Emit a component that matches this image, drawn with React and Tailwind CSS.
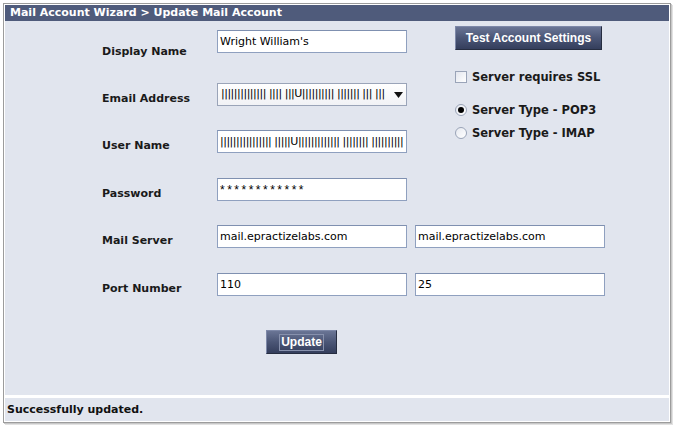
import React from 'react';

const inputCls =
  'h-[23px] w-[190px] border border-[#8fa0bf] border-t-[#7f90b0] bg-white px-[2px] text-[11px] leading-[21px] text-black outline-none';

function Field({ value, className = '' }) {
  return <input type="text" readOnly value={value} className={`${inputCls} ${className}`} />;
}

function Label({ children, top = 'pt-[9px]' }) {
  return <div className={`w-[115px] ${top} text-[11px] font-bold leading-[14px] text-[#1a1a1a]`}>{children}</div>;
}

function NavyButton({ children, className = '' }) {
  return (
    <button
      className={`border border-[#262d40] border-t-[#7d88a8] border-l-[#7d88a8] bg-gradient-to-b from-[#6a7595] via-[#4b5676] to-[#343e5c] font-['Liberation_Sans',sans-serif] text-[12px] font-bold text-white ${className}`}
    >
      {children}
    </button>
  );
}

function Radio({ checked, label }) {
  return (
    <label className="flex h-[14px] items-center gap-[5px]">
      <span className="flex h-[12px] w-[12px] items-center justify-center rounded-full border border-[#9aa4b8] bg-gradient-to-br from-[#e6e9f0] to-white">
        {checked && <span className="h-[6px] w-[6px] rounded-full bg-black" />}
      </span>
      <span className="text-[11.5px] font-bold leading-[14px] text-[#1a1a1a]">{label}</span>
    </label>
  );
}

export default function App() {
  return (
    <div className="h-[426px] w-[675px] bg-white pl-[3px] pt-[3px] font-['DejaVu_Sans',sans-serif]">
      <div className="flex h-[420px] w-[668px] flex-col border border-[#9c9c9c] bg-white p-px shadow-[1px_1px_0_#c8c8c8,2px_2px_0_#e2e2e2]">
        {/* Header */}
        <div className="h-[16px] bg-[#4f5b7b] pl-[5px] text-[11px] font-bold leading-[16px] text-white">
          Mail Account Wizard &gt; Update Mail Account
        </div>

        {/* Form body */}
        <div className="flex flex-1 flex-col bg-[#e1e5ee] pl-[97px]">
          <div className="flex items-start">
            <div className="flex w-[308px] flex-col">
              <div className="mt-[9px] flex h-[23px]">
                <Label top="pt-[15px]">Display Name</Label>
                <Field value="Wright William's" />
              </div>
              <div className="mt-[30px] flex h-[23px]">
                <Label>Email Address</Label>
                <div className="flex h-[23px] w-[190px] items-center justify-between border border-[#9aa4b8] bg-gradient-to-b from-white to-[#f1f2f5] pl-[3px] pr-[3px]">
                  <span className="overflow-hidden whitespace-nowrap text-[11px] tracking-[-0.5px]">
                    |||||||||||||| |||| |||U|||||||||| ||||||| ||| |||
                  </span>
                  <svg width="9" height="6" viewBox="0 0 9 6" className="ml-[4px] shrink-0">
                    <path d="M0 0 H9 L4.5 6 Z" fill="#111" />
                  </svg>
                </div>
              </div>
              <div className="mt-[24px] flex h-[23px]">
                <Label>User Name</Label>
                <Field
                  value="|||||||||||||||| |||||U||||||||||||| |||||||| |||||||||||||||||||"
                  className="tracking-[-0.5px]"
                />
              </div>
              <div className="mt-[25px] flex h-[23px]">
                <Label>Password</Label>
                <Field
                  value="************"
                  className="font-['Liberation_Sans',sans-serif] text-[12px] tracking-[2.5px] text-[#222]"
                />
              </div>
            </div>

            <div className="ml-[45px] flex flex-col">
              <NavyButton className="mt-[5px] h-[24px] w-[147px]">Test Account Settings</NavyButton>
              <label className="mt-[20px] flex h-[14px] items-center gap-[5px]">
                <span className="h-[12px] w-[12px] border border-[#9aa4b8] bg-gradient-to-br from-[#e3e6ee] to-white" />
                <span className="text-[11.5px] font-bold leading-[14px] text-[#1a1a1a]">Server requires SSL</span>
              </label>
              <div className="mt-[19px] flex flex-col gap-[9px]">
                <Radio checked label="Server Type - POP3" />
                <Radio label="Server Type - IMAP" />
              </div>
            </div>
          </div>

          <div className="mt-[24px] flex h-[23px]">
            <Label>Mail Server</Label>
            <Field value="mail.epractizelabs.com" />
            <Field value="mail.epractizelabs.com" className="ml-[8px]" />
          </div>
          <div className="mt-[25px] flex h-[23px]">
            <Label>Port Number</Label>
            <Field value="110" />
            <Field value="25" className="ml-[8px]" />
          </div>

          <div className="ml-[164px] mt-[34px] flex">
            <NavyButton className="flex h-[24px] w-[71px] items-center justify-center">
              <span className="border border-[#8791ad] px-[1px] leading-[15px]">Update</span>
            </NavyButton>
          </div>
        </div>

        {/* Status bar */}
        <div className="mt-[3px] h-[23px] bg-[#e1e5ee] pl-[2px] text-[11px] font-bold leading-[23px] text-[#111]">
          Successfully updated.
        </div>
      </div>
    </div>
  );
}
